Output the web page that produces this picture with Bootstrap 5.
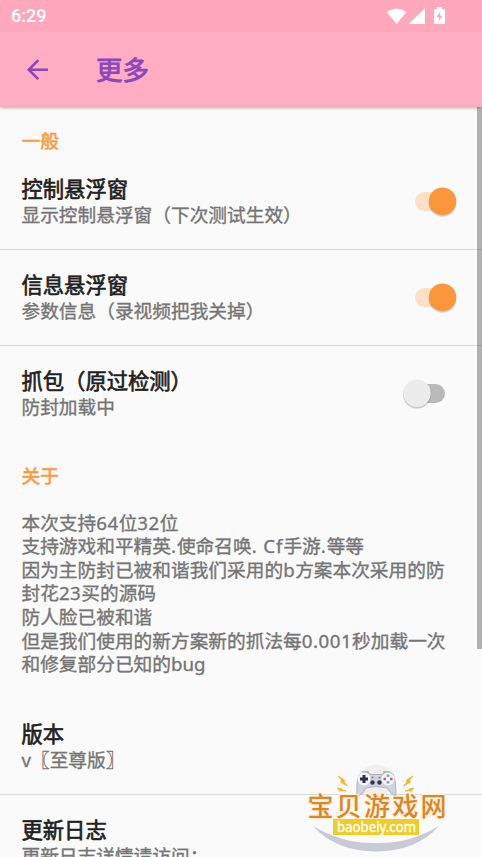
<!DOCTYPE html>
<html lang="zh-CN">
<head>
<meta charset="utf-8">
<meta name="viewport" content="width=device-width, initial-scale=1">
<title>更多</title>
<link href="https://cdn.jsdelivr.net/npm/bootstrap@5.3.0/dist/css/bootstrap.min.css" rel="stylesheet">
<style>
html,body{height:857px;overflow:hidden}
body{background:#fafafa;font-family:"Noto Sans","Noto Sans CJK SC",sans-serif;color:#212121}
.screen{width:482px;height:857px}
.status-strip{height:32px;background:#ffa7bd;padding-left:11px;padding-right:36px;color:#fff;font:500 18px/32px Roboto,sans-serif}
.app-bar{height:75px;background:#ffadc3;padding-left:26px;color:#8c47bd;box-shadow:0 2px 3px -1px rgba(0,0,0,.3)}
.app-bar h1{font-size:26.4px;line-height:40px;font-weight:400;-webkit-text-stroke:.9px #8c47bd;padding-left:47px}
.section-label{font-size:18.7px;line-height:24px;font-weight:400;color:#fc9840;-webkit-text-stroke:.55px #fc9840;padding-left:21.5px}
.label-general{padding-top:22px;height:47px}
.label-about{padding-top:22px;height:68.5px}
.pref{height:96px;padding:22px 0 0 21.5px;border-bottom:1px solid #dadada;white-space:nowrap}
.pref-title{font-size:21.3px;line-height:26px;margin-bottom:.5px;font-weight:400;-webkit-text-stroke:.65px #212121}
.pref-sub,.about-text{font-size:18.7px;line-height:24px;color:#757575;-webkit-text-stroke:.35px #757575}
.about-text{line-height:23.66px;padding-left:21.5px;height:188.5px;white-space:nowrap}
.about-text span{letter-spacing:.5px}
.about-text .wide{letter-spacing:.9px}
.toggle{width:42px;height:32px;margin-right:25px;margin-top:9px}
.scroll-thumb{right:0;top:107px;width:5px;height:542px;background:rgba(0,0,0,.29)}
.site-mark{left:305px;top:760px;width:145px;height:97px}
</style>
<script src="https://cdn.jsdelivr.net/npm/bootstrap@5.3.0/dist/js/bootstrap.bundle.min.js"></script>
</head>
<body>
<div class="screen position-relative overflow-hidden d-flex flex-column">
  <div class="status-strip d-flex justify-content-between align-items-center flex-shrink-0">
    <span>6:29</span>
    <svg width="60" height="20" viewBox="0 0 60 20" fill="#fff"><path d="M.8 6Q10.700-1 20.200 6L10.700 18Z"/><path d="M39 2.200V18H22.500Z"/><path fill-rule="evenodd" d="M49 3h2V1h5v2h2q1 0 1 1v13q0 1-1 1h-9q-1 0-1-1V4q0-1 1-1Zm5 3-3.500 5h2.500v4l3.500-5h-2.500Z"/></svg>
  </div>
  <header class="app-bar d-flex align-items-center flex-shrink-0">
    <svg width="23" height="22" viewBox="0 0 23 22" fill="none" stroke="#8c47bd" stroke-width="2.6"><path d="M22 10.700H2.800M12.300 1.200L2.800 10.700l9.500 9.500"/></svg>
    <h1 class="mb-0">更多</h1>
  </header>
  <main class="flex-shrink-0">
    <div class="section-label label-general">一般</div>
    <section class="pref d-flex justify-content-between">
      <div><div class="pref-title">控制悬浮窗</div><div class="pref-sub">显示控制悬浮窗（下次测试生效）</div></div>
      <svg class="toggle" viewBox="0 0 42 32"><rect x="0" y="7" width="35" height="19" rx="9.500" fill="#fbdfc7"/><circle cx="27.500" cy="18" r="14" fill="#000" opacity=".08"/><circle cx="27.500" cy="17.500" r="13.800" fill="#000" opacity=".12"/><circle cx="27.500" cy="16.200" r="13.700" fill="#fc963b"/></svg>
    </section>
    <section class="pref d-flex justify-content-between">
      <div><div class="pref-title">信息悬浮窗</div><div class="pref-sub">参数信息（录视频把我关掉）</div></div>
      <svg class="toggle" viewBox="0 0 42 32"><rect x="0" y="7" width="35" height="19" rx="9.500" fill="#fbdfc7"/><circle cx="27.500" cy="18" r="14" fill="#000" opacity=".08"/><circle cx="27.500" cy="17.500" r="13.800" fill="#000" opacity=".12"/><circle cx="27.500" cy="16.200" r="13.700" fill="#fc963b"/></svg>
    </section>
    <section class="pref d-flex justify-content-between border-0">
      <div><div class="pref-title">抓包（原过检测）</div><div class="pref-sub">防封加载中</div></div>
      <svg class="toggle overflow-visible" viewBox="0 0 42 32"><rect x="-5" y="7" width="35" height="19" rx="9.500" fill="#b9b9b9"/><circle cx="2" cy="18" r="14" fill="#000" opacity=".08"/><circle cx="2" cy="17.500" r="13.800" fill="#000" opacity=".12"/><circle cx="2" cy="16.200" r="13.700" fill="#ececec"/></svg>
    </section>
    <div class="section-label label-about">关于</div>
    <div class="about-text">本次支持<span>64</span>位<span>32</span>位<br>支持游戏和平精英<span class="wide">.</span>使命召唤<span class="wide">. Cf</span>手游<span class="wide">.</span>等等<br>因为主防封已被和谐我们采用的<span>b</span>方案本次采用的防<br>封花<span>23</span>买的源码<br>防人脸已被和谐<br>但是我们使用的新方案新的抓法每<span>0.001</span>秒加载一次<br>和修复部分已知的bug</div>
    <section class="pref"><div class="pref-title">版本</div><div class="pref-sub">v〖至尊版〗</div></section>
    <section class="pref border-0"><div class="pref-title">更新日志</div><div class="pref-sub">更新日志详情请访问：</div></section>
  </main>
  <div class="scroll-thumb position-absolute"></div>
  <svg class="site-mark position-absolute" viewBox="305 760 145 97">
    <circle cx="376" cy="781" r="16.500" fill="#efefef"/>
    <path d="M313 826Q343 844 376 843Q409 844 439 826Q417 851 376 851.500Q335 851 313 826Z" fill="#c9cad8"/>
    <path d="M362 772h7M383 772h7" stroke="#eebd48" stroke-width="2"/>
    <path d="M357 796Q356 776 360 774Q366 770 371 774.500H382Q387 770 393 774Q396 779 396 796Q391 795 387 788Q377 785 366 788Q362 796 357 796Z" fill="#d0d2de" stroke="#9ea2b1" stroke-width=".7"/>
    <circle cx="364" cy="779" r="6.500" fill="#f4f5fa"/><circle cx="388" cy="779" r="6.500" fill="#f4f5fa"/>
    <path d="M364 775v8M360 779h8" stroke="#273345" stroke-width="3"/>
    <path d="M388 774.500v2.500M388 781v2.500" stroke="#4eb7d3" stroke-width="2.600"/><path d="M383.500 779h2.500M390 779h2.500" stroke="#e94959" stroke-width="2.600"/>
    <circle cx="372.500" cy="782.500" r="2.200" fill="#2d394c"/><circle cx="379.500" cy="782.500" r="2.200" fill="#2d394c"/>
    <path d="M371.500 777.500h2M378.500 777.500h2" stroke="#e94959" stroke-width="1.500"/>
    <path d="M338 776l6.500 4-.5 2 3.500 4-7-4 1-2ZM337 788l5 1v1l4 1-7-.3v-1ZM413 776l-6.500 4 .5 2-3.500 4 7-4-1-2ZM414 788l-5 1v1l-4 1 7-.3v-1Z" fill="#f2b72e" stroke="#f2b72e" stroke-width=".9"/>
    <text x="307.500" y="815.500" textLength="139" lengthAdjust="spacing" font-family="Noto Sans CJK SC, sans-serif" font-size="26" font-weight="500" fill="#df8526" stroke="#fff1d8" stroke-width="2" paint-order="stroke">宝贝游戏网</text>
    <rect x="333" y="819" width="86" height="16" fill="#efcd28"/>
    <text x="337" y="831.500" textLength="79" lengthAdjust="spacingAndGlyphs" font-family="Noto Sans, sans-serif" font-size="14.500" fill="#fff" stroke="#fff" stroke-width=".3">baobeiy.com</text>
  </svg>
</div>
</body>
</html>
